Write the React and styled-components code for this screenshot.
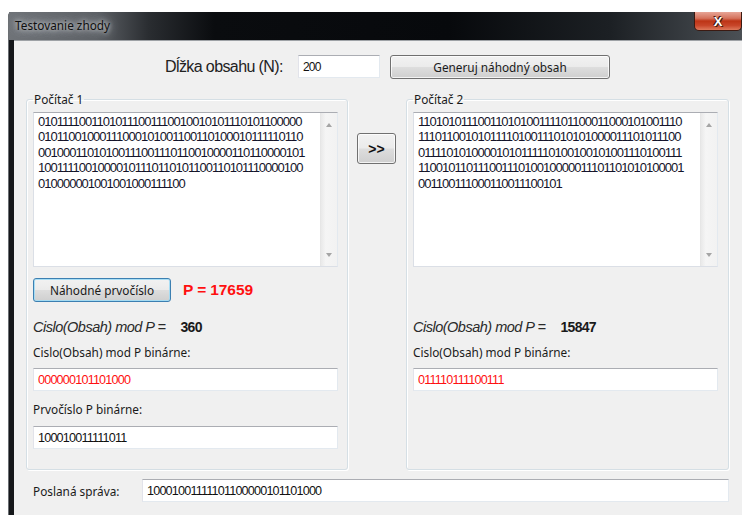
import React from "react";
import styled, { createGlobalStyle } from "styled-components";

const ARIAL = `"Liberation Sans", Arial, sans-serif`;
const UI = `"Segoe UI", "Noto Sans", "Open Sans", sans-serif`;

const GlobalStyle = createGlobalStyle`
  html, body {
    margin: 0;
    padding: 0;
    background: #ffffff;
    overflow: hidden;
  }
  body {
    font-family: ${UI};
  }
`;

const Window = styled.div`
  margin: 12px 0 0 8px;
  width: 734px;
  height: 503px;
  display: flex;
  flex-direction: column;
  background: #15171a;
  border-left: 1px solid #6b6f73;
  border-top-left-radius: 4px;
  box-sizing: border-box;
`;

const TitleBar = styled.div`
  height: 28px;
  display: flex;
  align-items: flex-start;
  background: linear-gradient(
    90deg,
    #6f7378 0%,
    #5d6166 12%,
    #2a2d31 19%,
    #0a0c0f 28%,
    #07090c 60%,
    #1c2024 82%,
    #4b5055 100%
  );
`;

const Title = styled.div`
  padding: 0 8px 0 6px;
  line-height: 27px;
  font-size: 11.8px;
  color: #101010;
  text-shadow: 0 0 4px #d8dadc, 0 0 8px #b9bdc1, 0 0 12px #9da1a5;
`;

const CloseButton = styled.div`
  margin-left: auto;
  width: 48px;
  height: 19px;
  box-sizing: border-box;
  border: 1px solid #3b1a12;
  border-top: none;
  border-radius: 0 0 5px 5px;
  background: linear-gradient(
    180deg,
    #e7a596 0%,
    #d5725c 35%,
    #bd3416 50%,
    #c8462a 75%,
    #de7a5c 100%
  );
  display: flex;
  align-items: center;
  justify-content: center;
  font: bold 13px ${ARIAL};
  color: #ffffff;
  text-shadow: 0 0 1px #2a0c06, 1px 1px 0 #4a1a10, -1px -1px 0 #4a1a10;
`;

const Client = styled.div`
  flex: 1;
  margin-left: 5px;
  background: #f0f0f0;
  border-top: 1px solid #9ea2a6;
  display: flex;
  flex-direction: column;
  padding: 13px 0 0 12px;
`;

const TopRow = styled.div`
  height: 25px;
  display: flex;
  align-items: flex-start;
  padding-left: 139px;
`;

const BigLabel = styled.span`
  width: 133px;
  font: 16px ${ARIAL};
  letter-spacing: -0.6px;
  color: #222;
  line-height: 25px;
`;

const Field = styled.input`
  box-sizing: border-box;
  width: ${(p) => p.$w}px;
  height: 23px;
  margin: ${(p) => p.$m || 0};
  padding: 0 0 0 4px;
  border: 1px solid #e3e9ef;
  border-top-color: #abadb3;
  border-left-color: #e2e3ea;
  background: #ffffff;
  font: ${(p) => p.$size || 12.6}px ${ARIAL};
  letter-spacing: -0.8px;
  color: ${(p) => (p.$red ? "#ff1010" : "#111111")};
  outline: none;
`;

const Button = styled.button`
  box-sizing: border-box;
  width: ${(p) => p.$w}px;
  height: ${(p) => p.$h}px;
  margin: ${(p) => p.$m || 0};
  padding: 0;
  border: 1px solid ${(p) => (p.$focus ? "#3c7fb1" : "#707070")};
  border-radius: 3px;
  background: linear-gradient(
    180deg,
    #f2f2f2 0%,
    #ebebeb 48%,
    #dddddd 52%,
    #cfcfcf 100%
  );
  box-shadow: inset 0 0 0 1px
    ${(p) => (p.$focus ? "rgba(160, 220, 245, 0.9)" : "rgba(255, 255, 255, 0.75)")};
  font: 11.8px ${UI};
  color: #1a1a1a;
  flex-shrink: 0;
`;

const ArrowButton = styled(Button)`
  font: bold 14px ${ARIAL};
  color: #111;
`;

const Middle = styled.div`
  margin-top: 13px;
  display: flex;
`;

const Group = styled.fieldset`
  box-sizing: border-box;
  width: ${(p) => p.$w}px;
  height: 378px;
  min-width: 0;
  margin: 0;
  padding: 6px 0 0 6px;
  border: 1px solid #d5dfe5;
  border-radius: 3px;
  box-shadow: inset 1px 1px 0 #ffffff, 1px 1px 0 #ffffff;
`;

const Legend = styled.legend`
  padding: 0 1px;
  margin: 0;
  font-size: 11.8px;
  line-height: 14px;
  color: #1a1a1a;
`;

const GroupBody = styled.div`
  display: flex;
  flex-direction: column;
`;

const TextBox = styled.div`
  box-sizing: border-box;
  width: 305px;
  height: 155px;
  display: flex;
  background: #ffffff;
  border: 1px solid #dbdfe6;
  border-top-color: #abadb3;
  border-right-color: #e3e9ef;
`;

const TextContent = styled.div`
  flex: 1;
  padding: 1px 0 0 4px;
  font: 13px ${ARIAL};
  letter-spacing: -1px;
  line-height: 15.4px;
  color: #14142a;
  white-space: pre;
  overflow: hidden;
`;

const ScrollTrack = styled.div`
  width: 17px;
  display: flex;
  flex-direction: column;
  justify-content: space-between;
  align-items: center;
  padding: 10px 0 9px;
  box-sizing: border-box;
  background: linear-gradient(90deg, #e9e9e9, #f5f5f5 30%, #f2f2f2);
  border-left: 1px solid #e6e6e6;
`;

const Arrow = styled.div`
  width: 0;
  height: 0;
  border-left: 3.5px solid transparent;
  border-right: 3.5px solid transparent;
  ${(p) =>
    p.$down
      ? "border-top: 4px solid #a5a5a5;"
      : "border-bottom: 4px solid #a5a5a5;"}
`;

const ButtonRow = styled.div`
  margin-top: 11px;
  height: 24px;
  display: flex;
  align-items: center;
`;

const PValue = styled.span`
  margin-left: 12px;
  font: bold 15.5px ${ARIAL};
  letter-spacing: -0.1px;
  color: #ff1010;
`;

const ModRow = styled.div`
  margin-top: 16px;
  height: 18px;
  display: flex;
  align-items: center;
`;

const ModLabel = styled.span`
  font: italic 14.5px ${ARIAL};
  letter-spacing: -0.5px;
  color: #2a2a2a;
`;

const ModValue = styled.span`
  margin-left: ${(p) => p.$gap}px;
  font: bold 14px ${ARIAL};
  letter-spacing: -0.7px;
  color: #1a1a1a;
`;

const SmallLabel = styled.div`
  margin-top: ${(p) => p.$mt}px;
  font-size: 11.8px;
  line-height: 16px;
  color: #1a1a1a;
`;

const Arrows = styled.div`
  width: 58px;
`;

const BottomRow = styled.div`
  margin-top: 9px;
  height: 23px;
  display: flex;
  align-items: center;
  padding-left: 7px;
`;

const SentLabel = styled.span`
  width: 109px;
  font-size: 11.8px;
  color: #1a1a1a;
`;

const left = [
  "01011110011010111001110010010101110101100000",
  "01011001000111000101001100110100010111110110",
  "00100011010100111001110110010000110110000101",
  "10011110010000101110110101100110101110000100",
  "010000001001001000111100",
].join("\n");

const right = [
  "11010101110011010100111101100011000101001110",
  "11101100101011110100111010101000011101011100",
  "01111010100001010111110100100101001110100111",
  "11001011011100111010010000011101101010100001",
  "001100111000110011100101",
].join("\n");

const Content = ({ text }) => (
  <TextBox>
    <TextContent>{text}</TextContent>
    <ScrollTrack>
      <Arrow />
      <Arrow $down />
    </ScrollTrack>
  </TextBox>
);

const App = () => {
  return (
    <>
      <GlobalStyle />
      <Window>
        <TitleBar>
          <Title>Testovanie zhody</Title>
          <CloseButton>X</CloseButton>
        </TitleBar>
        <Client>
          <TopRow>
            <BigLabel>Dĺžka obsahu (N):</BigLabel>
            <Field $w={82} $m="1px 0 0 0" $size={12} readOnly value="200" />
            <Button $w={220} $h={24} $m="1px 0 0 10px">
              Generuj náhodný obsah
            </Button>
          </TopRow>

          <Middle>
            <Group $w={322}>
              <Legend>Počítač 1</Legend>
              <GroupBody>
                <Content text={left} />
                <ButtonRow>
                  <Button $w={138} $h={24} $focus>
                    Náhodné prvočíslo
                  </Button>
                  <PValue>P = 17659</PValue>
                </ButtonRow>
                <ModRow>
                  <ModLabel>Cislo(Obsah) mod P =</ModLabel>
                  <ModValue $gap={15}>360</ModValue>
                </ModRow>
                <SmallLabel $mt={8}>Cislo(Obsah) mod P binárne:</SmallLabel>
                <Field $w={305} $m="8px 0 0" $red readOnly value="000000101101000" />
                <SmallLabel $mt={10}>Prvočíslo P binárne:</SmallLabel>
                <Field $w={305} $m="9px 0 0" readOnly value="100010011111011" />
              </GroupBody>
            </Group>

            <Arrows>
              <ArrowButton $w={39} $h={31} $m="41px 0 0 9px">
                &gt;&gt;
              </ArrowButton>
            </Arrows>

            <Group $w={323}>
              <Legend>Počítač 2</Legend>
              <GroupBody>
                <Content text={right} />
                <ButtonRow />
                <ModRow>
                  <ModLabel>Cislo(Obsah) mod P =</ModLabel>
                  <ModValue $gap={15}>15847</ModValue>
                </ModRow>
                <SmallLabel $mt={8}>Cislo(Obsah) mod P binárne:</SmallLabel>
                <Field $w={305} $m="8px 0 0" $red readOnly value="011110111100111" />
              </GroupBody>
            </Group>
          </Middle>

          <BottomRow>
            <SentLabel>Poslaná správa:</SentLabel>
            <Field $w={587} readOnly value="10001001111101100000101101000" />
          </BottomRow>
        </Client>
      </Window>
    </>
  );
};

export default App;
